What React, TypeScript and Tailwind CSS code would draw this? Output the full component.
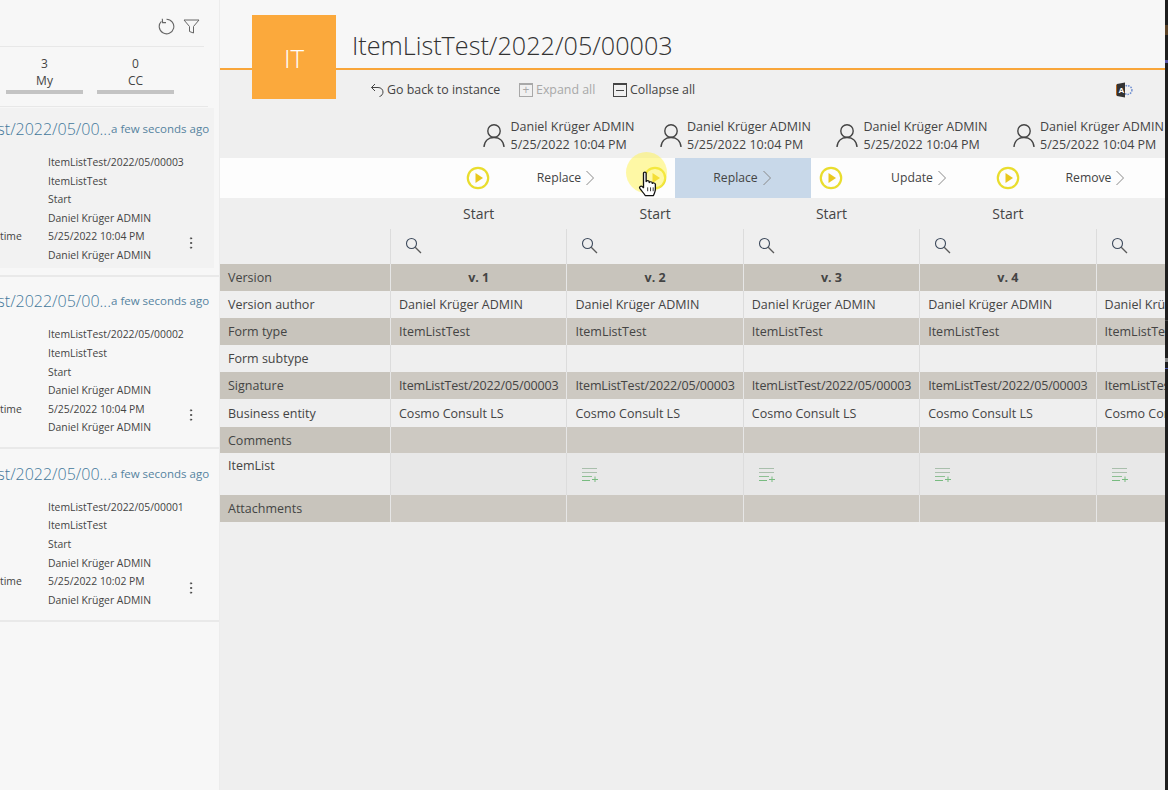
import { EllipsisVertical } from 'lucide-react'

const font = "font-['Open_Sans','Noto_Sans',sans-serif]"

const cards = [
  { sig: 'ItemListTest/2022/05/00003', date: '5/25/2022 10:04 PM', active: true },
  { sig: 'ItemListTest/2022/05/00002', date: '5/25/2022 10:04 PM', active: false },
  { sig: 'ItemListTest/2022/05/00001', date: '5/25/2022 10:02 PM', active: false },
]

const steps = [
  { label: 'Replace', active: false },
  { label: 'Replace', active: true },
  { label: 'Update', active: false },
  { label: 'Remove', active: false },
]

const rows = [
  { label: 'Version', value: 'version', dark: true, h: 'h-[27px]', pt: 'pt-[1px]' },
  { label: 'Version author', value: 'Daniel Krüger ADMIN', dark: false, h: 'h-[27px]', pt: 'pt-[1px]' },
  { label: 'Form type', value: 'ItemListTest', dark: true, h: 'h-[27px]', pt: 'pt-[1px]' },
  { label: 'Form subtype', value: '', dark: false, h: 'h-[27px]', pt: 'pt-[1px]' },
  { label: 'Signature', value: 'ItemListTest/2022/05/00003', dark: true, h: 'h-[27px]', pt: 'pt-[1px]' },
  { label: 'Business entity', value: 'Cosmo Consult LS', dark: false, h: 'h-[28px]', pt: 'pt-[2px]' },
  { label: 'Comments', value: '', dark: true, h: 'h-[26px]', pt: 'pt-[2px]' },
  { label: 'ItemList', value: 'list', dark: false, h: 'h-[42px]', pt: 'pt-[1px]' },
  { label: 'Attachments', value: '', dark: true, h: 'h-[27px]', pt: 'pt-[1px]' },
]

function PlayIcon() {
  return (
    <svg width="24" height="24" viewBox="0 0 24 24">
      <circle cx="12" cy="12" r="10.2" fill="none" stroke="#e9dd2e" strokeWidth="2.2" />
      <path d="M9.5 7 L17 12 L9.5 17 Z" fill="#e9c81e" />
    </svg>
  )
}

function PersonIcon() {
  return (
    <svg width="22" height="25" viewBox="0 0 22 25" fill="none" stroke="#444" strokeWidth="1.4">
      <circle cx="11" cy="8" r="6.2" />
      <path d="M1 24 C1.5 17.5 6 14.5 11 14.5 C16 14.5 20.5 17.5 21 24" />
    </svg>
  )
}

function StepChevron() {
  return (
    <svg width="10" height="16" viewBox="0 0 10 16" fill="none" stroke="#8a8a8a" strokeWidth="1">
      <path d="M1.5 1 L8.5 8 L1.5 15" />
    </svg>
  )
}

function RefreshIcon() {
  return (
    <svg width="17" height="17" viewBox="0 0 17 17" fill="none" stroke="#666" strokeWidth="1.1">
      <path d="M8.5 1.2 A7.3 7.3 0 1 1 3.4 3.3" />
      <path d="M4.3 0.8 L4.6 4.6 L8 4.6" />
    </svg>
  )
}

function FilterIcon() {
  return (
    <svg width="17" height="15" viewBox="0 0 17 15" fill="none" stroke="#666" strokeWidth="1">
      <path d="M1 1 H16 L10.5 7.5 V14 L6.5 12.5 V7.5 Z" />
    </svg>
  )
}

function BackIcon() {
  return (
    <svg width="14" height="14" viewBox="0 0 14 14" fill="none" stroke="#444" strokeWidth="1">
      <path d="M5 1 L1.5 4.5 L5 8" />
      <path d="M1.5 4.5 H8 C11 4.5 13 6.5 13 9 C13 11.2 11.5 13 9.5 13.5" />
    </svg>
  )
}

function SearchIcon() {
  return (
    <svg width="17" height="17" viewBox="0 0 17 17" fill="none">
      <circle cx="6.5" cy="6.5" r="5" stroke="#3d4a5c" strokeWidth="1.1" />
      <path d="M10.2 10.2 L16 16" stroke="#5a5a5a" strokeWidth="1.3" />
    </svg>
  )
}

function ListPlusIcon() {
  return (
    <svg width="17" height="15" viewBox="0 0 17 15" fill="none" strokeWidth="1">
      <path d="M0 1.5 H15" stroke="#a9bfac" />
      <path d="M0 5.5 H15" stroke="#a9bfac" />
      <path d="M0 9.5 H10" stroke="#8cc092" />
      <path d="M0 13.5 H8" stroke="#78bb80" />
      <path d="M10 12.5 H16 M13 9.5 V15" stroke="#78bb80" />
    </svg>
  )
}

function AccessIcon() {
  return (
    <svg width="17" height="16" viewBox="0 0 17 16">
      <circle cx="11.5" cy="8" r="4.4" fill="none" stroke="#6f8fd0" strokeWidth="1.5" strokeDasharray="1.6 1" />
      <path d="M1 2 L9 0.5 V15.5 L1 14 Z" fill="#333" />
      <path d="M0.5 2.5 V13.5" stroke="#b5651d" strokeWidth="1" />
      <text x="2.6" y="11" fontSize="8" fontWeight="700" fill="#fff" fontFamily="Liberation Sans">A</text>
    </svg>
  )
}

function HandCursor() {
  return (
    <svg width="22" height="26" viewBox="0 0 20 27" preserveAspectRatio="none" fill="#fff" stroke="#111" strokeWidth="1.2" strokeLinejoin="round">
      <path d="M5 2.2 C5 0.8 7.4 0.8 7.4 2.2 V11 C7.6 9.6 10 9.6 10.2 11 V12 C10.4 10.8 12.8 10.8 13 12.2 V13 C13.4 12 15.8 12.2 15.8 13.8 V19 C15.8 22 14.6 23.4 14 25.6 H6.6 C5.8 23.4 3 20.6 1.6 18 C0.8 16.4 2.6 15 4 16.2 L5 17.4 Z" />
      <path d="M8.8 17 V21 M11.4 17 V21 M13.8 17 V21" fill="none" strokeWidth="0.8" />
    </svg>
  )
}

function ApprovalCard({ sig, date, active }: { sig: string; date: string; active: boolean }) {
  return (
    <div className="mb-[3.4px] h-[169px] shrink-0 border-b-2 border-[#e9e9e9] pr-[5px]">
      <div className={`h-[160px] ${active ? 'bg-[#f2f2f2]' : ''}`}>
        <div className="flex h-[42px] items-center">
          <div className="flex w-[111px] justify-end overflow-hidden">
            <span className="whitespace-nowrap text-[16px] leading-[24px] font-light text-[#43789b]">ItemListTest/2022/05/00...</span>
          </div>
          <span className="whitespace-nowrap text-[11.5px] leading-4 text-[#55839f]">a few seconds ago</span>
        </div>
        <div className="mt-[3px] flex text-[10.4px] leading-[18.6px] text-[#444]">
          <div className="flex w-[48px] flex-col pt-[74.4px]">
            <span>time</span>
          </div>
          <div className="flex w-[135px] flex-col whitespace-nowrap">
            <span>{sig}</span>
            <span>ItemListTest</span>
            <span>Start</span>
            <span>Daniel Krüger ADMIN</span>
            <span>{date}</span>
            <span>Daniel Krüger ADMIN</span>
          </div>
          <div className="flex w-[16px] items-start justify-center pt-[82px]">
            <EllipsisVertical size={16} strokeWidth={1.4} color="#444" />
          </div>
        </div>
      </div>
    </div>
  )
}

function Sidebar() {
  return (
    <aside className="flex w-[220px] shrink-0 flex-col border-r border-[#ececec] bg-[#f7f7f7]">
      <div className="mr-[15px] flex h-[47px] shrink-0 items-center justify-end gap-[8px] border-b border-[#e8e8e8] pr-[4px] pt-[6px]">
        <RefreshIcon />
        <FilterIcon />
      </div>
      <div className="mr-[11px] flex h-[60px] shrink-0 gap-[14px] border-b border-[#e8e8e8] pl-[6px] pt-[8px] text-[12px] leading-[17px] text-[#444]">
        <div className="flex w-[77px] flex-col items-center">
          <span>3</span>
          <span>My</span>
          <span className="mt-[1px] h-[4px] w-full bg-[#c4c4c4]" />
        </div>
        <div className="flex w-[77px] flex-col items-center">
          <span>0</span>
          <span>CC</span>
          <span className="mt-[1px] h-[4px] w-full bg-[#c4c4c4]" />
        </div>
      </div>
      <div className="mt-[1px]">
        {cards.map((c) => (
          <ApprovalCard key={c.sig} {...c} />
        ))}
      </div>
    </aside>
  )
}

function Header() {
  return (
    <>
      <div className="relative h-[70px] shrink-0 border-b-2 border-[#f9a63a] bg-[#f7f7f7] pl-[132px] pt-[26px]">
        <h1 className="whitespace-nowrap text-[25.2px] leading-[38px] font-light text-[#333]">ItemListTest/2022/05/00003</h1>
        <div className="absolute left-[32px] top-[15px] z-10 flex h-[84px] w-[84px] items-center justify-center bg-[#fba93c] pt-[3px] text-[26px] font-light text-white">
          IT
        </div>
      </div>
      <div className="flex h-[40px] shrink-0 items-center bg-[#f0f0f0] pl-[150px] pr-[32px] text-[12.4px] text-[#444]">
        <BackIcon />
        <span className="ml-[3px] w-[132px]">Go back to instance</span>
        <div className="flex w-[94px] items-center gap-[3px] text-[#a8a8a8]">
          <span className="flex h-[14px] w-[14px] items-center justify-center border border-t-2 border-[#a8a8a8] text-[12px] leading-none">+</span>
          <span>Expand all</span>
        </div>
        <div className="flex items-center gap-[3px]">
          <span className="flex h-[14px] w-[14px] items-center justify-center border border-t-2 border-[#444]">
            <span className="h-px w-[8px] bg-[#444]" />
          </span>
          <span>Collapse all</span>
        </div>
        <div className="ml-auto">
          <AccessIcon />
        </div>
      </div>
    </>
  )
}

function Approvers() {
  return (
    <div className="flex h-[48px] shrink-0 bg-[#efefef] pl-[263px] pt-[8px] text-[12.5px] leading-[18px] text-[#444]">
      {[0, 1, 2, 3].map((i) => (
        <div key={i} className="flex w-[176.5px] shrink-0 gap-[5.5px] whitespace-nowrap">
          <span className="pt-[5px]"><PersonIcon /></span>
          <div className="flex flex-col">
            <span>Daniel Krüger ADMIN</span>
            <span>5/25/2022 10:04 PM</span>
          </div>
        </div>
      ))}
    </div>
  )
}

function Steps() {
  return (
    <div className="flex h-[40px] shrink-0 bg-[#fdfdfd] pl-[238px] text-[12.2px] text-[#444]">
      {steps.map((s, i) => (
        <div key={i} className="flex w-[176.5px] shrink-0">
          <div className="flex w-[40px] items-center justify-center"><PlayIcon /></div>
          <div className={`flex w-[136px] items-center justify-center gap-[4px] ${s.active ? 'bg-[#c8d8e9]' : ''}`}>
            <span className="pt-[1px]">{s.label}</span>
            <StepChevron />
          </div>
        </div>
      ))}
    </div>
  )
}

function CompareTable() {
  return (
    <div className="flex flex-col text-[12.5px] text-[#444]">
      <div className="grid h-[31px] grid-cols-[170px_repeat(5,176.4px)] items-center pb-[1px] text-[14px]">
        <span />
        {['Start', 'Start', 'Start', 'Start', ''].map((t, i) => (
          <span key={i} className="pl-[1px] text-center">{t}</span>
        ))}
      </div>
      <div className="grid h-[35px] grid-cols-[170px_repeat(5,176.4px)]">
        <span />
        {[0, 1, 2, 3, 4].map((i) => (
          <span key={i} className="flex items-center border-l border-[#dcdcdc] pb-[3px] pl-[14px]">
            <SearchIcon />
          </span>
        ))}
      </div>
      {rows.map((r) => (
        <div key={r.label} className={`grid grid-cols-[170px_repeat(5,176.4px)] ${r.h} ${r.dark ? 'bg-[#c8c4bc]' : 'bg-[#efefef]'}`}>
          <span className={`flex pl-[8px] ${r.value === 'list' ? 'items-start pt-[4px]' : `items-center ${r.pt}`}`}>{r.label}</span>
          {[1, 2, 3, 4, 5].map((n) => (
            <span
              key={n}
              className={`flex items-center overflow-hidden whitespace-nowrap border-l ${r.pt} ${r.dark ? 'border-[#e6e6e6]' : 'border-[#dcdcdc]'} ${r.value === 'version' ? 'justify-center bg-[#c8c4bc] font-bold' : `pl-[8px] ${r.dark ? 'bg-[#cdc9c2]' : ''}`} ${r.value === 'list' ? 'bg-[#e8e8e8]' : ''} ${r.label === 'Signature' ? 'tracking-[-0.15px]' : ''}`}
            >
              {r.value === 'version' && `v. ${n}`}
              {r.value === 'list' && n > 1 && <span className="pl-[7px]"><ListPlusIcon /></span>}
              {r.value !== 'version' && r.value !== 'list' && r.value}
            </span>
          ))}
        </div>
      ))}
    </div>
  )
}

export default function App() {
  return (
    <div className={`relative flex h-[790px] w-[1168px] overflow-hidden bg-[#efefef] ${font}`}>
      <Sidebar />
      <main className="flex w-[945px] shrink-0 flex-col overflow-hidden">
        <Header />
        <Approvers />
        <Steps />
        <CompareTable />
      </main>
      <div className="relative w-[3px] shrink-0 bg-[#1e1e1e]">
        <span className="absolute left-0 top-[25px] h-[10px] w-full bg-[#5c4326]" />
        <span className="absolute left-0 top-[60px] h-[3px] w-full bg-[#5a56a8]" />
        <span className="absolute left-0 top-[320px] h-px w-full bg-[#444]" />
        <span className="absolute left-0 top-[358px] h-[4px] w-full bg-[#8a8a8a]" />
        <span className="absolute left-0 top-[368px] h-px w-full bg-[#4a5ab0]" />
      </div>
      {/* click highlight and pointer */}
      <div className="absolute left-[626px] top-[152px] h-[41px] w-[41px] rounded-full bg-[#fff34d]/50" />
      <div className="absolute left-[638px] top-[171px]"><HandCursor /></div>
    </div>
  )
}
